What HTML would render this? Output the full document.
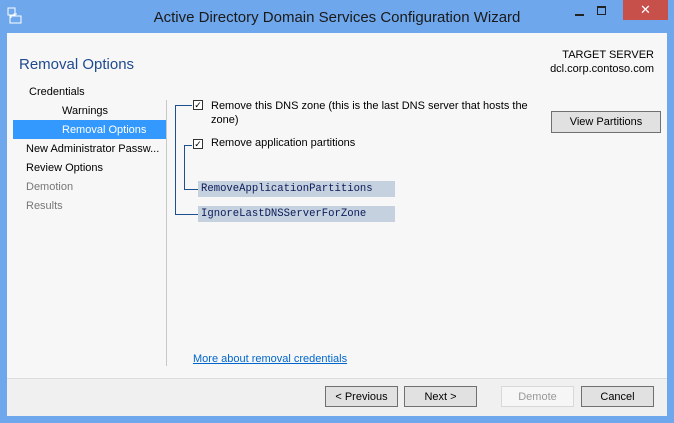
<!DOCTYPE html>
<html><head><style>
*{margin:0;padding:0;box-sizing:border-box}
body{width:674px;height:423px;background:#6ea7ec;font-family:"Liberation Sans",sans-serif;font-size:11px;color:#000;position:relative;overflow:hidden}
.a{position:absolute;white-space:nowrap}
.btn{position:absolute;height:21px;border:1px solid #707070;background:#e1e1e1;text-align:center;line-height:20px;font-size:11px}
.cb{position:absolute;width:10px;height:10px;border:1px solid #333;background:#fff;font-size:9px;line-height:8px;text-align:center}
.ln{position:absolute;background:#1d4f91}
.code{position:absolute;background:#c5d1de;font-family:"Liberation Mono",monospace;font-size:10.6px;color:#0b1b5a;line-height:16px;padding-left:3px;width:197px;height:16px}
</style></head><body>
<svg class="a" style="left:7px;top:7px" width="16" height="18"><rect x="1" y="1" width="7" height="7" fill="none" stroke="#fff"/><rect x="3" y="9" width="11" height="7" fill="none" stroke="#fff"/><path d="M4 8v3M7 9v-2h3" stroke="#fff" fill="none"/></svg>
<div class="a" style="left:0;width:674px;top:9px;text-align:center;font-size:15px;color:#1a1a1a">Active Directory Domain Services Configuration Wizard</div>
<div class="a" style="left:575px;top:14px;width:9px;height:2px;background:#222"></div>
<div class="a" style="left:597px;top:6px;width:9px;height:9px;border:1px solid #222;border-top-width:2px"></div>
<div class="a" style="left:623px;top:0;width:45px;height:20px;background:#c7504b;color:#fff;text-align:center;font-size:13px;line-height:20px">✕</div>
<div class="a" style="left:7px;top:33px;width:660px;height:345px;background:#f7f7f7"></div>
<div class="a" style="left:7px;top:378px;width:660px;height:38px;background:#f0f0f0;border-top:1px solid #dcdcdc"></div>
<div class="a" style="left:19px;top:56px;font-size:15px;color:#1f4a8e">Removal Options</div>
<div class="a" style="right:20px;top:48px;text-align:right;line-height:14px">TARGET SERVER<br>dcl.corp.contoso.com</div>
<div class="a" style="left:166px;top:100px;width:1px;height:266px;background:#c8c8c8"></div>
<div class="a" style="left:29px;top:86px">Credentials</div>
<div class="a" style="left:62px;top:105px">Warnings</div>
<div class="a" style="left:13px;top:120px;width:153px;height:19px;background:#3399ff"></div>
<div class="a" style="left:62px;top:124px;color:#fff">Removal Options</div>
<div class="a" style="left:26px;top:143px">New Administrator Passw...</div>
<div class="a" style="left:26px;top:162px">Review Options</div>
<div class="a" style="left:26px;top:181px;color:#777">Demotion</div>
<div class="a" style="left:26px;top:200px;color:#777">Results</div>
<div class="ln" style="left:175px;top:105px;width:1px;height:110px"></div>
<div class="ln" style="left:175px;top:105px;width:17px;height:1px"></div>
<div class="ln" style="left:175px;top:214px;width:23px;height:1px"></div>
<div class="ln" style="left:184px;top:145px;width:1px;height:44px"></div>
<div class="ln" style="left:184px;top:145px;width:8px;height:1px"></div>
<div class="ln" style="left:184px;top:189px;width:14px;height:1px"></div>
<div class="cb" style="left:193px;top:100px">✓</div>
<div class="cb" style="left:193px;top:139px">✓</div>
<div class="a" style="left:211px;top:99px;line-height:14px">Remove this DNS zone (this is the last DNS server that hosts the<br>zone)</div>
<div class="a" style="left:211px;top:137px">Remove application partitions</div>
<div class="code" style="left:198px;top:181px">RemoveApplicationPartitions</div>
<div class="code" style="left:198px;top:206px">IgnoreLastDNSServerForZone</div>
<div class="btn" style="left:551px;top:111px;width:110px;height:22px;line-height:21px">View Partitions</div>
<div class="a" style="left:193px;top:353px;color:#0066cc;text-decoration:underline">More about removal credentials</div>
<div class="btn" style="left:325px;top:386px;width:73px">&lt; Previous</div>
<div class="btn" style="left:404px;top:386px;width:73px">Next &gt;</div>
<div class="btn" style="left:501px;top:386px;width:73px;border-color:#d8d8d8;background:#f6f6f6;color:#999">Demote</div>
<div class="btn" style="left:581px;top:386px;width:73px">Cancel</div>
</body></html>
